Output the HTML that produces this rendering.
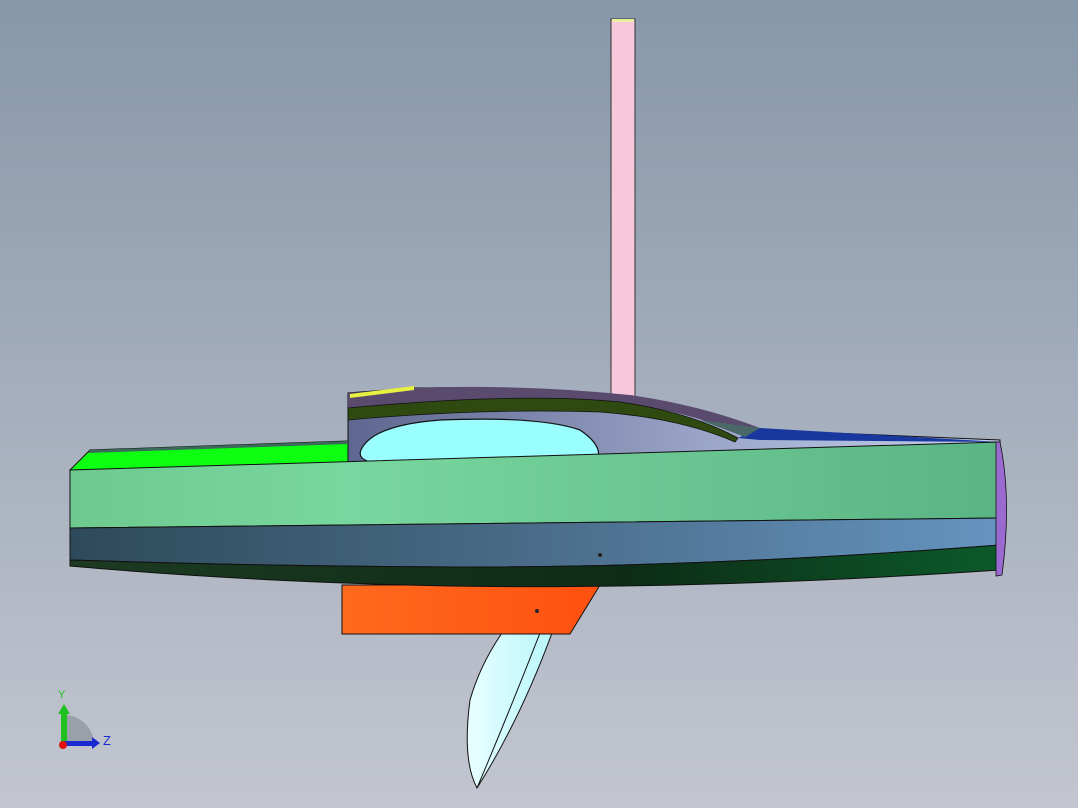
<!DOCTYPE html>
<html><head><style>
html,body{margin:0;padding:0;width:1078px;height:808px;overflow:hidden}
body{background:linear-gradient(#8797a9,#c3c6d0);font-family:"Liberation Sans",sans-serif}
</style></head><body>
<svg width="1078" height="808" viewBox="0 0 1078 808" xmlns="http://www.w3.org/2000/svg">
<defs>
<linearGradient id="g1" x1="0" x2="1"><stop offset="0" stop-color="#6ec98e"/><stop offset="0.3" stop-color="#78d79e"/><stop offset="1" stop-color="#5ab484"/></linearGradient>
<linearGradient id="g2" x1="0" x2="1"><stop offset="0" stop-color="#2e4a5a"/><stop offset="0.5" stop-color="#4a6c88"/><stop offset="1" stop-color="#6494c0"/></linearGradient>
<linearGradient id="g3" x1="0" x2="1"><stop offset="0" stop-color="#1d3a22"/><stop offset="0.6" stop-color="#0d2c16"/><stop offset="1" stop-color="#0c5a2a"/></linearGradient>
<linearGradient id="g4" x1="0" x2="1"><stop offset="0" stop-color="#5e6790"/><stop offset="0.7" stop-color="#aab6d6"/><stop offset="1" stop-color="#c2cde8"/></linearGradient>
<linearGradient id="ko" x1="0" x2="1"><stop offset="0" stop-color="#ff6a1e"/><stop offset="1" stop-color="#ff5010"/></linearGradient>
<linearGradient id="fin" x1="0" x2="1"><stop offset="0" stop-color="#e8ffff"/><stop offset="1" stop-color="#b8f6fa"/></linearGradient>
</defs>
<!-- mast -->
<rect x="611" y="19" width="24" height="378" fill="#f7c7dc" stroke="#333" stroke-width="1"/>
<rect x="612" y="19" width="22" height="3" fill="#e8f0a0"/>
<!-- fin -->
<path d="M502 633 L552 633 Q520 720 477 788 Q462 760 470 700 Q480 665 502 633Z" fill="url(#fin)" stroke="#111" stroke-width="1"/>
<path d="M540 633 Q510 710 477 788" fill="none" stroke="#111" stroke-width="1"/>
<!-- keel -->
<path d="M342 585 L600 585 L570 634 L342 634Z" fill="url(#ko)" stroke="#111" stroke-width="1"/>
<!-- cabin -->
<path d="M348 393 L348 466 L1000 442 L1000 440 L760 430 Q700 408 630 397 Q520 386 414 388 L348 393Z" fill="url(#g4)" stroke="#111" stroke-width="1"/>
<path d="M348 393 L414 388 Q520 384 630 395 Q700 405 760 428 L748 436 Q690 412 620 402 Q520 392 348 408Z" fill="#5a4a6e"/>
<path d="M348 408 Q520 392 620 402 Q690 412 738 438 L735 442 Q680 418 600 412 Q480 408 348 420Z" fill="#2e4a10" stroke="#111" stroke-width="0.8"/>
<path d="M350 394 L414 386 L414 390 L350 398Z" fill="#e8f040"/>
<path d="M738 438 L760 428 L1000 442 L760 440Z" fill="#1838a0"/>
<path d="M700 420 L760 428 L745 437Z" fill="#4a6868"/>
<!-- window -->
<path d="M362 448 Q375 425 440 420 Q540 416 580 430 Q602 445 598 458 Q490 462 370 462 Q356 458 362 448Z" fill="#9afdfe" stroke="#111" stroke-width="1.2"/>
<!-- bow deck green -->
<path d="M70 470 L90 450 L348 441 L348 466 Z" fill="#0dff12" stroke="#111" stroke-width="1"/>
<path d="M90 450 L348 441 L348 444 L88 453Z" fill="#3a6a5a"/>
<!-- green band -->
<path d="M70 470 L1000 442 L1000 518 L70 528Z" fill="url(#g1)" stroke="#111" stroke-width="1"/>
<!-- blue band -->
<path d="M70 528 L1000 518 L1000 545 Q700 568 450 567 Q250 566 70 560Z" fill="url(#g2)" stroke="#111" stroke-width="1"/>
<!-- dark band -->
<path d="M70 560 Q250 566 450 567 Q700 568 1000 545 L1000 570 Q700 590 450 586 Q250 582 70 566Z" fill="url(#g3)" stroke="#111" stroke-width="1"/>
<!-- stern -->
<path d="M996 442 L1000 442 Q1012 500 1002 575 L996 576Z" fill="#9a6ad0" stroke="#111" stroke-width="0.8"/>
<circle cx="600" cy="555" r="2" fill="#222"/><circle cx="537" cy="611" r="2" fill="#223"/>
<!-- axes -->
<path d="M64 745 L64 715 A30 30 0 0 1 94 745Z" fill="#9aa0aa"/>
<rect x="61" y="712" width="6" height="33" fill="#20c020"/>
<polygon points="58,714 64,704 70,714" fill="#20c020"/>
<rect x="64" y="741" width="28" height="5" fill="#1a2ad0"/>
<polygon points="92,737 100,743 92,749" fill="#1a2ad0"/>
<circle cx="63" cy="745" r="4" fill="#e01010"/>
<text x="58" y="698" font-size="11" fill="#20c020">Y</text>
<text x="103" y="745" font-size="13" fill="#1a2ad0">Z</text>
</svg>
</body></html>
